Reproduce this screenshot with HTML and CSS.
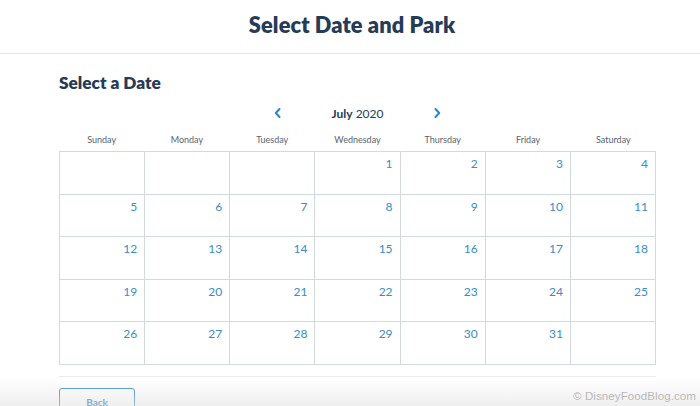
FILE: index.html
```html
<!DOCTYPE html>
<html lang="en">
<head>
<meta charset="utf-8">
<title>Select Date and Park</title>
<link rel="stylesheet" href="styles.css">
</head>
<body>
<header class="page-header">
  <h1 class="page-title">Select Date and Park</h1>
</header>
<main class="content">
  <h2 class="section-title">Select a Date</h2>
  <div class="month-nav">
    <button class="nav-btn" aria-label="Previous month">
      <svg width="7" height="10" viewBox="0 0 7 10"><path d="M5.5 1 L1.8 5 L5.5 9" fill="none" stroke="currentColor" stroke-width="2" stroke-linecap="round" stroke-linejoin="round"/></svg>
    </button>
    <div class="month-label"><strong>July</strong> 2020</div>
    <button class="nav-btn" aria-label="Next month">
      <svg width="7" height="10" viewBox="0 0 7 10"><path d="M1.5 1 L5.2 5 L1.5 9" fill="none" stroke="currentColor" stroke-width="2" stroke-linecap="round" stroke-linejoin="round"/></svg>
    </button>
  </div>
  <div class="weekdays">
    <span>Sunday</span><span>Monday</span><span>Tuesday</span><span>Wednesday</span><span>Thursday</span><span>Friday</span><span>Saturday</span>
  </div>
  <div class="calendar">
    <div class="day"></div><div class="day"></div><div class="day"></div>
    <div class="day">1</div><div class="day">2</div><div class="day">3</div><div class="day">4</div>
    <div class="day">5</div><div class="day">6</div><div class="day">7</div><div class="day">8</div><div class="day">9</div><div class="day">10</div><div class="day">11</div>
    <div class="day">12</div><div class="day">13</div><div class="day">14</div><div class="day">15</div><div class="day">16</div><div class="day">17</div><div class="day">18</div>
    <div class="day">19</div><div class="day">20</div><div class="day">21</div><div class="day">22</div><div class="day">23</div><div class="day">24</div><div class="day">25</div>
    <div class="day">26</div><div class="day">27</div><div class="day">28</div><div class="day">29</div><div class="day">30</div><div class="day">31</div><div class="day"></div>
  </div>
  <div class="footer-bar">
    <button class="back-btn">Back</button>
  </div>
</main>
<div class="shade"></div>
<div class="watermark">© DisneyFoodBlog.com</div>
</body>
</html>
```
FILE: styles.css
```css
html, body {
  margin: 0;
  padding: 0;
  background: #ffffff;
  overflow: hidden;
}
body {
  font-family: Lato, "Open Sans", "Liberation Sans", sans-serif;
  color: #253b56;
  width: 700px;
  height: 406px;
  position: relative;
}
.page-header {
  height: 53px;
  border-bottom: 1px solid #e4e6ea;
  display: flex;
  align-items: center;
  justify-content: center;
}
.page-title {
  margin: 0;
  font-size: 21.8px;
  font-weight: 800;
  letter-spacing: 0.1px;
  color: #253b56;
  position: relative;
  left: 2px;
  top: -2px;
}
.content {
  width: 597px;
  margin-left: 59px;
}
.section-title {
  margin: 19px 0 0 0;
  font-size: 17.2px;
  font-weight: 800;
  line-height: 20px;
  color: #253b56;
}
.month-nav {
  margin-top: 11px;
  height: 18px;
  display: flex;
  align-items: center;
  justify-content: center;
  gap: 45px;
}
.nav-btn {
  border: 0;
  background: none;
  padding: 0;
  width: 10px;
  height: 12px;
  color: #2b87c8;
  display: flex;
  align-items: center;
  justify-content: center;
}
.month-label {
  font-size: 12px;
  color: #253b56;
  width: 60px;
  text-align: center;
}
.month-label strong {
  font-weight: 700;
}
.weekdays {
  margin-top: 11px;
  display: grid;
  grid-template-columns: repeat(7, 1fr);
  font-size: 9px;
  color: #5a6370;
  line-height: 14px;
  height: 18px;
}
.weekdays span {
  text-align: center;
}
.calendar {
  display: grid;
  grid-template-columns: repeat(7, 1fr);
  grid-auto-rows: 41.5px;
  gap: 1px;
  background: #d2d9e1;
  border: 1px solid #d2d9e1;
}
.day {
  background: #ffffff;
  text-align: right;
  padding: 5px 7px 0 0;
  font-size: 12px;
  line-height: 14px;
  color: #3a8cc6;
}
.footer-bar {
  margin-top: 11px;
  border-top: 1px solid #e8eaed;
  padding-top: 11px;
}
.back-btn {
  width: 76px;
  height: 30px;
  border: 1.5px solid #3a8cc6;
  border-radius: 3px;
  background: #ffffff;
  color: #2b7fbd;
  font-family: Lato, "Liberation Sans", sans-serif;
  font-weight: 700;
  font-size: 10px;
  padding: 0 0 10px 0;
  line-height: 26px;
}
.shade {
  position: absolute;
  left: 0;
  right: 0;
  bottom: 0;
  height: 28px;
  background: linear-gradient(to bottom, rgba(230,230,230,0), rgba(225,225,225,0.55));
  pointer-events: none;
}
.watermark {
  position: absolute;
  right: 4px;
  bottom: 4px;
  font-family: "Liberation Sans", Arial, sans-serif;
  font-size: 11.5px;
  color: #b9b9b9;
  letter-spacing: 0.1px;
}
```
